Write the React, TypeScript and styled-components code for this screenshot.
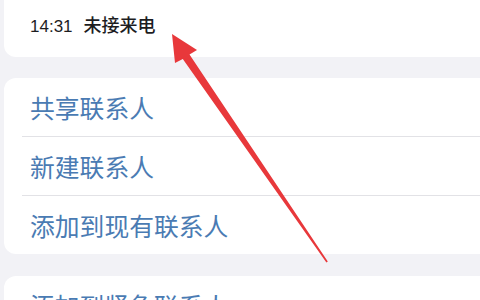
import React from "react";
import styled, { createGlobalStyle } from "styled-components";

const Global = createGlobalStyle`
  html, body { margin: 0; padding: 0; background: #f2f2f6; }
  body { font-family: "Noto Sans CJK SC", "Noto Sans", sans-serif; }
`;

const Page = styled.div`
  position: relative;
  width: 480px;
  height: 300px;
  overflow: hidden;
  background: #f2f2f6;
  padding-left: 4px;
  box-sizing: border-box;
  display: flex;
  flex-direction: column;
  gap: 21px;
`;

const TopCard = styled.div`
  flex-shrink: 0;
  background: #ffffff;
  height: 57px;
  margin-right: -16px;
  border-radius: 0 0 12px 12px;
  box-sizing: border-box;
  padding: 13px 0 0 26px;
  display: flex;
  align-items: baseline;
  gap: 11px;
  color: #1d1d1f;
`;

const Time = styled.span`
  font-family: "Liberation Sans", "Noto Sans", sans-serif;
  font-size: 17px;
  line-height: 22px;
`;

const Label = styled.span`
  font-size: 18px;
  line-height: 22px;
  font-weight: 500;
`;

const Card = styled.div<{ $gapTop?: number }>`
  flex-shrink: 0;
  background: #ffffff;
  border-radius: 12px;
  margin-right: -16px;
  display: flex;
  flex-direction: column;
  margin-top: ${(p) => p.$gapTop ?? 0}px;
`;

const Row = styled.div<{ $last?: boolean }>`
  flex-shrink: 0;
  height: 58px;
  margin-left: 18px;
  padding-left: 8px;
  display: flex;
  align-items: center;
  font-size: 24.8px;
  color: #4a7bb3;
  border-bottom: ${(p) => (p.$last ? "none" : "1px solid #e2e2e6")};
`;

const Arrow = styled.svg`
  position: absolute;
  left: 0;
  top: 0;
  pointer-events: none;
`;

export default function App() {
  return (
    <>
      <Global />
      <Page>
        <TopCard>
          <Time>14:31</Time>
          <Label>未接来电</Label>
        </TopCard>
        <Card>
          <Row>共享联系人</Row>
          <Row>新建联系人</Row>
          <Row $last>添加到现有联系人</Row>
        </Card>
        <Card $gapTop={1}>
          <Row $last>添加到紧急联系人</Row>
        </Card>
        <Arrow width="480" height="300" viewBox="0 0 480 300">
          <polygon
            points="172,34 197,50 189.5,54.5 327.8,261.4 326.4,262.4 182.8,58.9 175,63"
            fill="#e8383b"
          />
        </Arrow>
      </Page>
    </>
  );
}
